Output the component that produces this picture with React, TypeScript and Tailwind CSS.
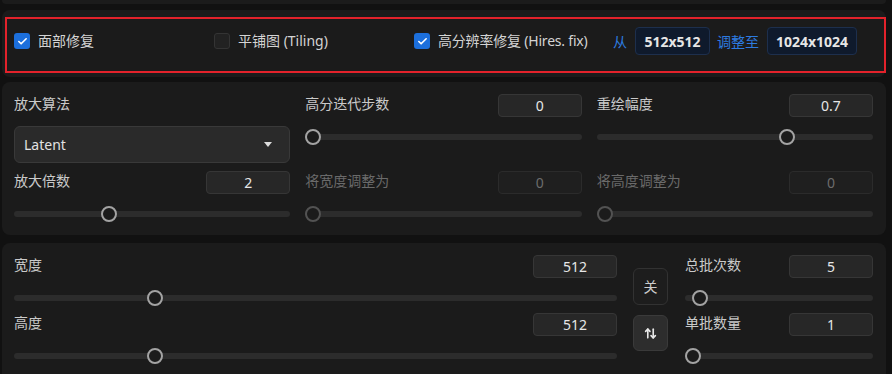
import React from "react";
import { Check, ArrowUpDown } from "lucide-react";

const FONT = { fontFamily: '"Noto Sans", "Noto Sans CJK SC", sans-serif' };

function CheckBox({ checked, label }: { checked: boolean; label: string }) {
  return (
    <div className="flex items-center gap-2 w-[200px] shrink-0">
      {checked ? (
        <div className="w-4 h-4 rounded-[3px] bg-[#1c6fdc] flex items-center justify-center">
          <Check size={11} strokeWidth={3.5} color="#ffffff" />
        </div>
      ) : (
        <div className="w-4 h-4 rounded-[3px] bg-[#222222] border border-[#343434]" />
      )}
      <span className="text-[14px] text-[#d4d4d4] leading-none">{label}</span>
    </div>
  );
}

function NumBox({ value, disabled, w = "w-[84px]" }: { value: string; disabled?: boolean; w?: string }) {
  return (
    <div
      className={
        "h-[23px] rounded-[4px] border flex items-center justify-center text-[14px] " +
        w +
        " " +
        (disabled
          ? "bg-[#1f1f1f] border-[#2b2b2b] text-[#6c6c6c]"
          : "bg-[#272727] border-[#363636] text-[#e6e6e6]")
      }
    >
      {value}
    </div>
  );
}

function Slider({ p, disabled }: { p: number; disabled?: boolean }) {
  return (
    <div className="relative h-4 w-full">
      <div className="absolute left-0 right-0 top-[5px] h-[6px] rounded-full bg-[#2c2c2c]" />
      <div
        className={
          "absolute top-0 w-4 h-4 rounded-full border-2 bg-[#1b1b1b] " +
          (disabled ? "border-[#525252]" : "border-[#a3a3a3]")
        }
        style={{ left: `calc(${p} * (100% - 16px))` }}
      />
    </div>
  );
}

function Field({
  label,
  value,
  p,
  disabled,
}: {
  label: string;
  value: string;
  p: number;
  disabled?: boolean;
}) {
  return (
    <div className="flex flex-col">
      <div className="flex items-start justify-between h-[23px]">
        <span className={"text-[14px] leading-[19px] " + (disabled ? "text-[#6a6a6a]" : "text-[#cacaca]")}>{label}</span>
        <NumBox value={value} disabled={disabled} />
      </div>
      <div className="mt-[12px]">
        <Slider p={p} disabled={disabled} />
      </div>
    </div>
  );
}

export default function App() {
  return (
    <div className="w-[892px] h-[374px] overflow-hidden bg-[#111111]" style={FONT}>
      <div className="ml-[2px] w-[884px] flex flex-col">
        <div className="h-[4px] rounded-b-lg bg-[#1b1b1b]" />
        {/* top options panel */}
        <div className="mt-[6px] rounded-lg bg-[#1b1b1b] pl-[3px] pt-[7px] pb-[4px]">
          <div className="border-2 border-[#e3222b] h-[56px] pl-[7px] pt-[8px] pb-[16px]">
            <div className="flex items-center h-[28px]">
              <CheckBox checked label="面部修复" />
              <CheckBox checked={false} label="平铺图 (Tiling)" />
              <div className="w-[199px] shrink-0">
                <div className="flex items-center gap-2">
                  <div className="w-4 h-4 rounded-[3px] bg-[#1c6fdc] flex items-center justify-center">
                    <Check size={11} strokeWidth={3.5} color="#ffffff" />
                  </div>
                  <span className="text-[14px] text-[#d4d4d4] leading-none tracking-[-0.2px]">高分辨率修复 (Hires. fix)</span>
                </div>
              </div>
              <span className="text-[14px] text-[#2d7be0] mr-[8px]">从</span>
              <div className="h-[28px] w-[75px] rounded-[4px] bg-[#0f1a2c] border border-[#1d2f4d] flex items-center justify-center text-[14px] font-bold text-[#e6e6e6]">
                512x512
              </div>
              <span className="text-[14px] text-[#2d7be0] ml-[7px] mr-[8px]">调整至</span>
              <div className="h-[28px] w-[90px] rounded-[4px] bg-[#0f1a2c] border border-[#1d2f4d] flex items-center justify-center text-[14px] font-bold text-[#e6e6e6]">
                1024x1024
              </div>
            </div>
          </div>
        </div>

        {/* hires panel */}
        <div className="mt-[5px] rounded-lg bg-[#1b1b1b] pl-[12px] pr-[13px] pt-[12px] pb-[13px]">
          <div className="grid grid-cols-3 gap-x-[15px] gap-y-[8px]">
            <div className="flex flex-col">
              <div className="h-[23px] flex items-start">
                <span className="text-[14px] leading-[19px] text-[#cacaca]">放大算法</span>
              </div>
              <div className="mt-[9px] h-[37px] rounded-md bg-[#2a2a2a] border border-[#393939] flex items-center justify-between pl-[9px] pr-[17px]">
                <span className="text-[14px] text-[#e2e2e2]">Latent</span>
                <div className="w-0 h-0 border-l-[4px] border-r-[4px] border-t-[5px] border-l-transparent border-r-transparent border-t-[#dcdcdc]" />
              </div>
            </div>
            <Field label="高分迭代步数" value="0" p={0} />
            <Field label="重绘幅度" value="0.7" p={0.7} />
            <Field label="放大倍数" value="2" p={1 / 3} />
            <Field label="将宽度调整为" value="0" p={0} disabled />
            <Field label="将高度调整为" value="0" p={0} disabled />
          </div>
        </div>

        {/* size panel */}
        <div className="mt-[8px] h-[140px] rounded-t-lg bg-[#1b1b1b] pl-[12px] pr-[13px] pt-[12px]">
          <div className="flex">
            <div className="w-[603px] flex flex-col gap-[7px]">
              <Field label="宽度" value="512" p={448 / 1984} />
              <Field label="高度" value="512" p={448 / 1984} />
            </div>
            <div className="ml-[16px] w-[35px] flex flex-col items-center justify-center gap-[10px]">
              <div className="w-[35px] h-[37px] rounded-md bg-[#1d1d1d] border border-[#323232] flex items-center justify-center text-[14px] text-[#cccccc]">
                关
              </div>
              <div className="w-[35px] h-[36px] rounded-md bg-[#2d2d2d] border border-[#3a3a3a] flex items-center justify-center">
                <ArrowUpDown size={13} strokeWidth={3} color="#e8e8e8" />
              </div>
            </div>
            <div className="ml-[17px] flex-1 flex flex-col gap-[7px]">
              <Field label="总批次数" value="5" p={4 / 99} />
              <Field label="单批数量" value="1" p={0} />
            </div>
          </div>
        </div>
      </div>
    </div>
  );
}
